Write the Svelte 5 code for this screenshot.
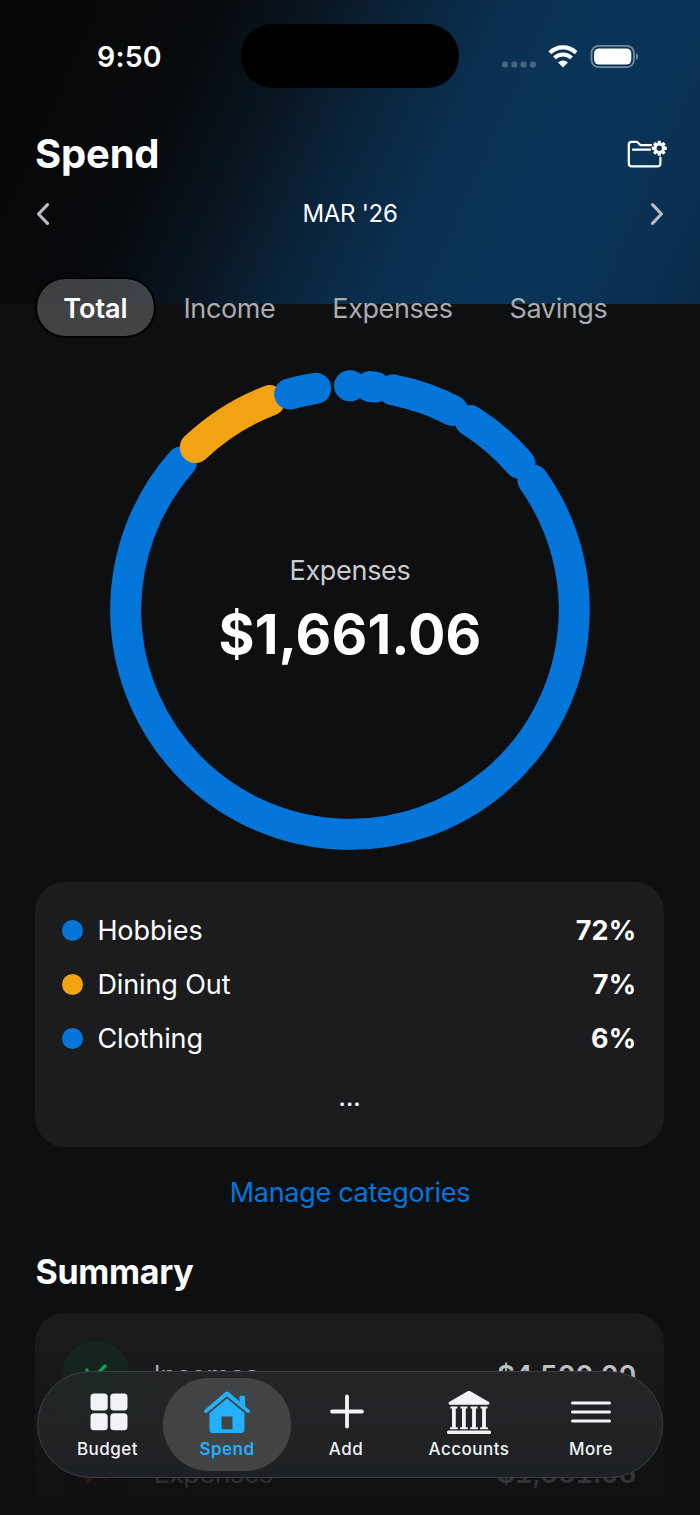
<script lang="ts">
  type Slice = { from: number; to: number; color: string };

  const BLUE = "#0476d9";
  const AMBER = "#f2a312";
  const RADIUS = 224.3;

  let activeTab = $state("Total");
  let activeNav = $state("Spend");

  const tabs = ["Total", "Income", "Expenses", "Savings"];
  const navItems = ["Budget", "Spend", "Add", "Accounts", "More"];

  // Angles in degrees, clockwise from twelve o'clock. Later slices overlap earlier ones.
  const slices: Slice[] = [
    { from: -0.1, to: 0.1, color: BLUE },
    { from: 5.2, to: 6.4, color: BLUE },
    { from: 11.1, to: 27.2, color: BLUE },
    { from: 32.4, to: 49.2, color: BLUE },
    { from: 54.6, to: 311.3, color: BLUE },
    { from: 316.4, to: 339, color: AMBER },
    { from: 344.4, to: 351.2, color: BLUE },
  ];

  const categories = [
    { name: "Hobbies", share: "72%", color: BLUE },
    { name: "Dining Out", share: "7%", color: AMBER },
    { name: "Clothing", share: "6%", color: BLUE },
  ];

  function point(deg: number) {
    const a = (deg * Math.PI) / 180;
    return `${(240 + RADIUS * Math.sin(a)).toFixed(2)} ${(240 - RADIUS * Math.cos(a)).toFixed(2)}`;
  }
  function arc(s: Slice) {
    return `M${point(s.from)}A${RADIUS} ${RADIUS} 0 ${s.to - s.from > 180 ? 1 : 0} 1 ${point(s.to)}`;
  }

  // Eight-toothed cog, centred on 0,0
  const teeth = [0, 45, 90, 135, 180, 225, 270, 315];
</script>

<div class="screen">
  <div class="status">
    <span class="time">9:50</span>
    <div class="island"></div>
    <div class="signals">
      <svg width="36" height="24" viewBox="0 0 36 24" fill="#fff" fill-opacity="0.25">
        <rect x="1" y="16.5" width="6" height="6" rx="2" /><rect x="10.3" y="16.5" width="6" height="6" rx="2" />
        <rect x="19.6" y="16.5" width="6" height="6" rx="2" /><rect x="28.9" y="16.5" width="6" height="6" rx="2" />
      </svg>
      <svg class="wifi" width="30" height="24" viewBox="0 0 30 24" fill="none" stroke="#fff">
        <path d="M1.9 7.7a18.8 18.8 0 0 1 26.2 0" stroke-width="4.1" />
        <path d="M6.5 12.9a12.2 12.2 0 0 1 17 0" stroke-width="4" />
        <path d="M15 22.5l-4.9-5a7 7 0 0 1 9.8 0z" fill="#fff" stroke="none" />
      </svg>
      <svg width="48" height="24" viewBox="0 0 48 24" fill="none">
        <rect x="1.5" y="0.9" width="42.4" height="21.2" rx="7" stroke="#fff" stroke-opacity="0.42" stroke-width="1.8" />
        <rect x="4.1" y="3.4" width="37.2" height="16.2" rx="5" fill="#fff" />
        <path d="M46.1 8.1c2.4 1.2 2.4 5.600 0 6.800z" fill="#fff" fill-opacity="0.5" />
      </svg>
    </div>
  </div>

  <header>
    <h1>Spend</h1>
    <button class="icon" aria-label="Category settings">
      <svg width="42" height="32" viewBox="0 0 42 32" fill="none" stroke="#fff" stroke-width="2.2" stroke-linecap="round" stroke-linejoin="round">
        <path d="M25 6.2H14.5L11.5 3.2Q11 2.8 10.2 2.8H5.5Q2.8 2.8 2.8 5.5V24.4Q2.8 27.4 5.8 27.4H31.4Q34.4 27.4 34.4 24.4V18.5" />
        <path d="M7 10.7H24" />
        <g transform="translate(33.3 9.3)">
          {#each teeth as t}
            <rect x="-1.7" y="-7.5" width="3.4" height="4" rx="0.7" fill="#fff" stroke="none" transform="rotate({t})" />
          {/each}
          <circle r="4.2" stroke-width="3" />
        </g>
      </svg>
    </button>
  </header>

  <div class="month">
    <button class="icon" aria-label="Previous month">
      <svg width="14" height="24" viewBox="0 0 14 24"><path d="M11.5 2.7L2.5 12l9 9.3" /></svg>
    </button>
    <span>MAR '26</span>
    <button class="icon" aria-label="Next month">
      <svg width="14" height="24" viewBox="0 0 14 24"><path d="M2.5 2.7L11.5 12l-9 9.3" /></svg>
    </button>
  </div>

  <nav class="tabs">
    {#each tabs as tab}
      <button class:active={activeTab === tab} onclick={() => (activeTab = tab)}>{tab}</button>
    {/each}
  </nav>

  <div class="chart">
    <svg width="480" height="480" viewBox="0 0 480 480" fill="none" stroke-width="31" stroke-linecap="round">
      {#each slices as s}
        <path d={arc(s)} stroke={s.color} />
      {/each}
    </svg>
    <div class="center">
      <span class="caption">Expenses</span>
      <span class="amount">$1,661.06</span>
    </div>
  </div>

  <section class="card legend">
    {#each categories as c}
      <div class="row">
        <i class="dot" style="background: {c.color}"></i>
        <span class="name">{c.name}</span>
        <span class="share">{c.share}</span>
      </div>
    {/each}
    <div class="ellipsis">...</div>
  </section>

  <button class="manage">Manage categories</button>

  <h2>Summary</h2>
  <section class="card summary">
    <div class="entry">
      <span class="badge in">
        <svg width="30" height="30" viewBox="0 0 30 30"><path d="M24 6L6 24M6 10V24H20" /></svg>
      </span>
      <span class="label">Incomes</span>
      <span class="value">$4,500.00</span>
    </div>
    <div class="entry">
      <span class="badge out">
        <svg width="30" height="30" viewBox="0 0 30 30"><path d="M6 24L24 6M10 6H24V20" /></svg>
      </span>
      <span class="label">Expenses</span>
      <span class="value">$1,661.06</span>
    </div>
  </section>

  <div class="fade"></div>

  <nav class="bar">
    {#each navItems as item}
      <button class:active={activeNav === item} onclick={() => (activeNav = item)}>
        <svg width="48" height="44" viewBox="0 0 48 44" fill="currentColor">
          {#if item === "Budget"}
            <rect x="6.5" y="2.6" width="17.2" height="17" rx="3.6" /><rect x="26.3" y="2.6" width="17.2" height="17" rx="3.6" />
            <rect x="6.5" y="22.3" width="17.2" height="17" rx="3.6" /><rect x="26.3" y="22.3" width="17.2" height="17" rx="3.6" />
          {:else if item === "Spend"}
            <path d="M1.6 18.9L22.2 1.2Q24 -.2 25.8 1.2L36.5 10.4V6Q36.5 4.8 37.7 4.8H40.8Q42 4.8 42 6V15.2L46.4 18.9Q47.6 20.2 46.6 21.3T43.9 21.6L24 5.2L4.1 21.6Q2.4 22.4 1.4 21.3T1.6 18.9Z" />
            <path fill-rule="evenodd" d="M24 7.6L41.5 22V38.5Q41.5 42 38 42H10Q6.5 42 6.5 38.5V22ZM18.5 25.6V38.2H29.5V25.6Z" />
          {:else if item === "Add"}
            <path d="M25 5.5V35.5M10 20.5H40" fill="none" stroke="currentColor" stroke-width="3.8" stroke-linecap="round" />
          {:else if item === "Accounts"}
            <path d="M4.5 10.8L22.6 .3Q24 -.3 25.4 .3L43.5 10.800Q44.700 11.700 44.300 13Q44 13.800 43 13.800H5Q4 13.800 3.700 13Q3.300 11.700 4.500 10.800Z" />
            {#each [8.9, 18.9, 29, 39] as x}
              <path d="M{x - 3.5} 15.6h7v2h-1.6v18.6h2v2.1h-7.8v-2.1h2v-18.6h-1.6z" />
            {/each}
            <rect x="2" y="39.6" width="44" height="3.4" rx="1.5" />
          {:else}
            <path d="M5.5 12H42.5M5.5 21H42.5M5.5 30H42.5" stroke="currentColor" stroke-width="3" stroke-linecap="round" />
          {/if}
        </svg>
        <span>{item}</span>
      </button>
    {/each}
  </nav>
</div>

<style>
  :global(body) { background: #0e0f11; }
  .screen {
    position: relative; width: 700px; height: 1515px; overflow: hidden; box-sizing: border-box;
    font-family: Inter, "Liberation Sans", sans-serif; color: #fff;
    background: linear-gradient(114deg, #070707 8%, #070a0e 26%, #09141f 37%, #0a253d 50%, #0a2f50 61%, #0a3457 72%, #0a3357 84%, #0a2c4b 100%) 0 0 / 700px 304px no-repeat, #0e0f11;
  }
  button { font: inherit; color: inherit; background: none; border: 0; padding: 0; cursor: pointer; }
  svg { display: block; }
  h1, h2 { margin: 0; }

  .status { display: grid; grid-template-columns: 241px 218px 241px; align-items: center; height: 112px; }
  .time { font-size: 28.5px; font-weight: 600; padding: 2px 0 0 97px; letter-spacing: 0.2px; line-height: 34px; }
  .island { height: 64px; border-radius: 32px; background: #000; }
  .signals { display: flex; align-items: center; padding: 1px 0 0 42px; }
  .wifi { margin: 0 12px 0 11px; }

  header { display: flex; align-items: center; justify-content: space-between; height: 84px; padding: 0 32px 0 35px; }
  h1 { font-size: 40px; font-weight: 700; letter-spacing: -0.2px; line-height: 48px; margin-top: -1px; }
  header svg { margin-top: 2px; }

  .month { display: flex; align-items: center; justify-content: space-between; height: 36px; padding: 0 36px; font-size: 24px; letter-spacing: -0.3px; }
  .month path { fill: none; stroke: #b9bcc0; stroke-width: 3.2; stroke-linecap: round; stroke-linejoin: round; }
  .month span { margin-top: -1px; }

  .tabs { display: flex; height: 61px; margin-top: 45px; padding-left: 35px; }
  .tabs button { box-sizing: border-box; padding: 1px 28.5px 0; border-radius: 30px; font-size: 27px; letter-spacing: -0.4px; color: #a9abae; white-space: nowrap; }
  .tabs .active {
    width: 121px; padding: 1px 0 0; margin-right: -1px; font-weight: 600; color: #fff; letter-spacing: 0;
    background: rgba(255, 255, 255, 0.22); background-clip: padding-box; border: 2px solid #030303;
  }

  .chart { position: relative; width: 480px; height: 480px; margin: 32px auto 0; }
  .center {
    position: absolute; inset: 0; display: flex; flex-direction: column; align-items: center; padding-top: 184px; box-sizing: border-box;
  }
  .caption { font-size: 27px; line-height: 34px; letter-spacing: -0.3px; color: #cbcccd; }
  .amount { font-size: 55px; font-weight: 700; line-height: 66px; letter-spacing: 0.2px; margin-top: 13px; }

  .card { box-sizing: border-box; width: 629px; margin-left: 35.4px; border-radius: 30px; background: #1c1c1e; }
  .legend { height: 265px; margin-top: 32px; padding: 21px 28px 21px 27px; }
  .row { display: flex; align-items: center; height: 54.3px; font-size: 27px; letter-spacing: -0.1px; }
  .dot { width: 21px; height: 21px; border-radius: 50%; margin-right: 14px; }
  .share { margin-left: auto; font-weight: 700; letter-spacing: 0.2px; }
  .ellipsis { text-align: center; font-size: 27px; line-height: 34px; letter-spacing: -0.4px; margin-top: 14px; }
  .manage { display: block; margin: 28px auto 0; font-size: 27px; line-height: 36px; letter-spacing: -0.3px; color: #0476d9; }

  h2 { font-size: 34px; font-weight: 700; line-height: 42px; letter-spacing: -0.3px; margin: 40px 0 0 35.5px; }
  .summary { height: 300px; margin-top: 20px; padding: 13px 28px 13px 27px; }
  .entry { display: flex; align-items: center; height: 98px; font-size: 27px; }
  .badge { display: grid; place-items: center; width: 68px; height: 68px; border-radius: 50%; margin-right: 23px; }
  .badge path { fill: none; stroke-width: 3.4; stroke-linecap: round; stroke-linejoin: round; }
  .in { background: #182a22; }
  .in path { stroke: #12d66a; }
  .out { background: #1d1919; }
  .out path { stroke: #e0402e; }
  .label { color: #d5d5d7; letter-spacing: -0.5px; }
  .value { margin-left: auto; font-size: 27.5px; font-weight: 600; font-variant-numeric: tabular-nums; }

  .fade {
    position: absolute; left: 0; right: 0; bottom: 0; height: 215px;
    background: linear-gradient(rgba(14, 15, 17, 0), rgba(14, 15, 17, 0.25) 30%, rgba(14, 15, 17, 0.82) 80%, rgba(14, 15, 17, 0.96));
  }

  .bar {
    position: absolute; left: 37px; top: 1371px; width: 626px; height: 107px; box-sizing: border-box; border-radius: 53.5px;
    border: 1.5px solid #3b3d41; padding: 6px 5px;
    background: radial-gradient(circle at 60px 5px, #1d2825, rgba(29, 40, 37, 0) 60px), linear-gradient(#242427, #1e2123);
    display: grid; grid-template-columns: 120px 128px 110px 136px 1fr; color: #f2f3f6;
  }
  .bar button {
    display: flex; flex-direction: column; align-items: center; padding-top: 13px; border-radius: 46px;
    font-size: 17px; font-weight: 500; letter-spacing: 0.5px; line-height: 22px;
  }
  .bar button:first-child { padding-left: 9px; }
  .bar button:last-child { padding-right: 12px; }
  .bar span { margin-top: 3px; }
  .bar .active { background: #424345; color: #22b0ff; font-weight: 600; }
</style>
